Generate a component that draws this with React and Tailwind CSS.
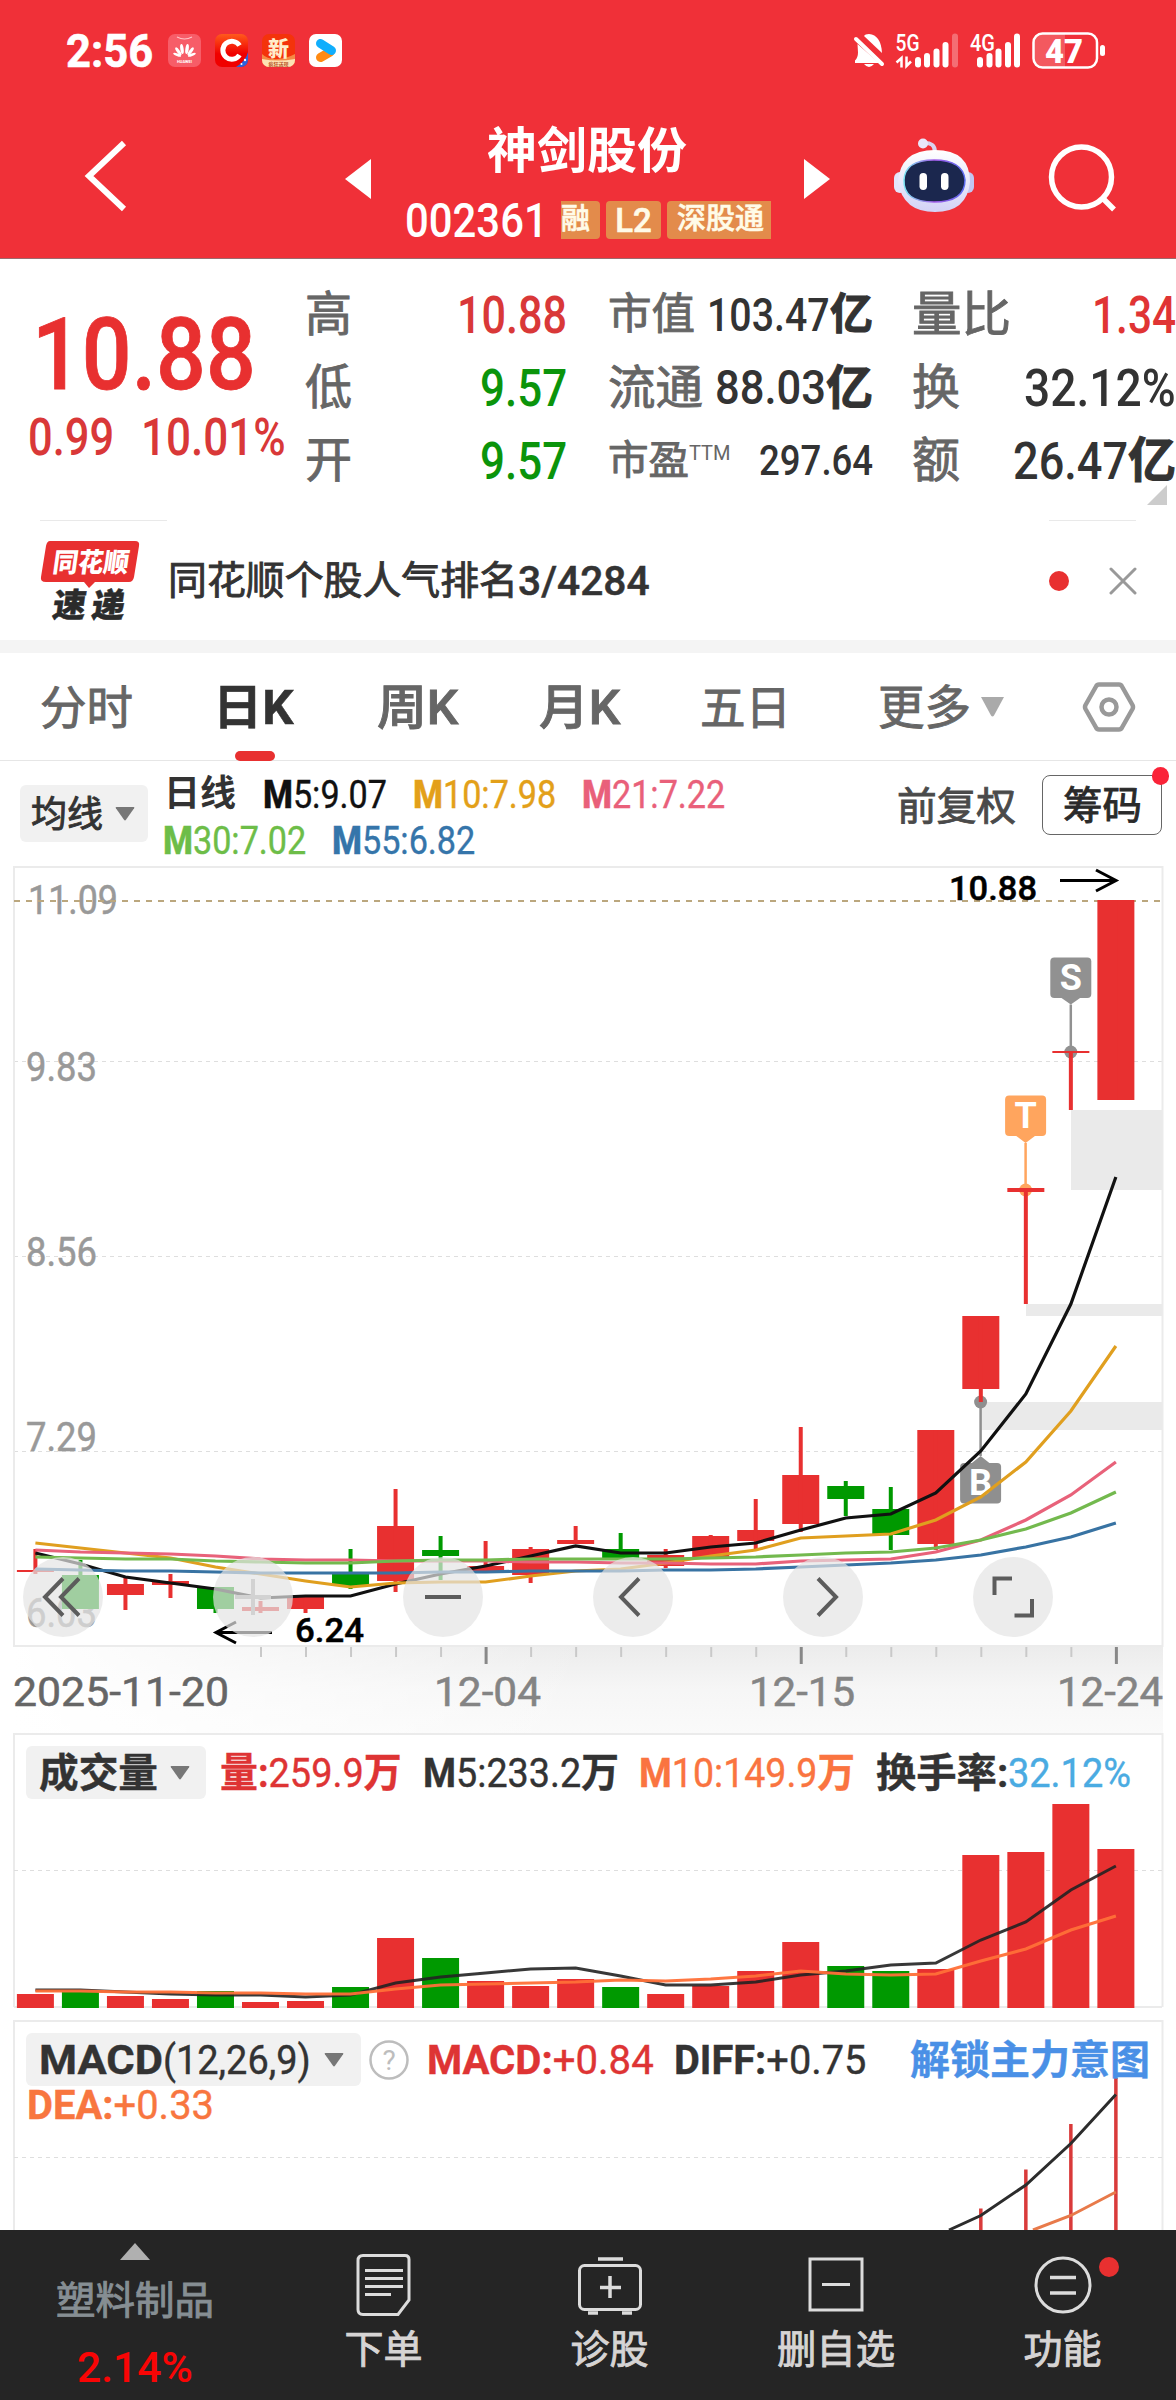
import { useLayoutEffect, useRef } from 'react'

const RED = '#e83030'
const GREEN = '#009900'

// x centre of the n-th trading day, shared by every chart
const cx = (i) => 35.4 + i * 45.02

// [up, bodyTop, bodyBottom, wickTop, wickBottom]
const CANDLES = [
  [1, 1570, 1572, 1549, 1574],
  [0, 1575, 1609, 1560, 1609],
  [1, 1584, 1595, 1578, 1610],
  [1, 1581, 1585, 1574, 1598],
  [0, 1587, 1609, 1587, 1613],
  [1, 1607, 1611, 1601, 1613],
  [1, 1597, 1609, 1597, 1613],
  [0, 1574, 1586, 1549, 1589],
  [1, 1526, 1581, 1489, 1592],
  [0, 1550, 1556, 1536, 1580],
  [1, 1566, 1571, 1541, 1572],
  [1, 1549, 1575, 1547, 1583],
  [1, 1540, 1544, 1526, 1544],
  [0, 1549, 1559, 1533, 1560],
  [1, 1555, 1566, 1549, 1568],
  [1, 1536, 1557, 1535, 1557],
  [1, 1530, 1541, 1499, 1549],
  [1, 1475, 1524, 1427, 1532],
  [0, 1486, 1499, 1481, 1516],
  [0, 1509, 1535, 1487, 1550],
  [1, 1430, 1544, 1430, 1550],
  [1, 1316, 1389, 1316, 1402],
  [1, 1188, 1192, 1190, 1304],
  [1, 1051, 1053, 1052, 1110],
  [1, 900, 1100, 900, 1100],
]

const AVERAGES = [
  { color: '#111111', y: [1553, 1564, 1577, 1583, 1589, 1598, 1596, 1596, 1584, 1574, 1566, 1556, 1546, 1553, 1553, 1547, 1543, 1530, 1518, 1514, 1493, 1451, 1394, 1304, 1177] },
  { color: '#e09f1f', y: [1543, 1548, 1553, 1558, 1567, 1574, 1581, 1587, 1583, 1582, 1582, 1576, 1571, 1569, 1563, 1556, 1550, 1538, 1536, 1534, 1520, 1497, 1462, 1411, 1346] },
  { color: '#e8627a', y: [1550, 1552, 1553, 1554, 1556, 1559, 1560, 1560, 1561, 1561, 1561, 1562, 1562, 1563, 1563, 1564, 1564, 1561, 1560, 1559, 1552, 1540, 1520, 1495, 1462] },
  { color: '#73b94e', y: [1557, 1558, 1559, 1559, 1561, 1562, 1563, 1563, 1561, 1560, 1560, 1559, 1559, 1559, 1559, 1558, 1557, 1555, 1553, 1552, 1548, 1540, 1529, 1513, 1492] },
  { color: '#3873a3', y: [1569, 1570, 1571, 1571, 1572, 1573, 1573, 1573, 1573, 1572, 1572, 1571, 1571, 1571, 1570, 1570, 1569, 1567, 1565, 1563, 1560, 1555, 1547, 1537, 1523] },
]

const VOLUME_TOPS = [1994, 1992, 1996, 1999, 1991, 2002, 2001, 1987, 1938, 1958, 1981, 1986, 1979, 1987, 1994, 1986, 1971, 1942, 1966, 1971, 1969, 1855, 1852, 1804, 1849]
const VOLUME_M5 = [1990, 1990, 1992, 1994, 1995, 1995, 1997, 1995, 1983, 1977, 1973, 1969, 1968, 1976, 1985, 1985, 1982, 1975, 1971, 1965, 1963, 1940, 1922, 1890, 1866]
const VOLUME_M10 = [1991, 1991, 1992, 1992, 1993, 1993, 1994, 1994, 1989, 1985, 1984, 1983, 1982, 1980, 1981, 1979, 1976, 1971, 1974, 1975, 1974, 1961, 1949, 1930, 1916]

const linePoints = (ys) => ys.map((y, i) => `${cx(i)},${y}`).join(' ')

// Condenses one line of text to the width its class gives it
function Fit({ className = '', children }) {
  const box = useRef(null)
  const text = useRef(null)

  useLayoutEffect(() => {
    const scale = box.current.clientWidth / text.current.offsetWidth
    text.current.style.transform = `translateY(3%) scaleX(${scale})`
  }, [children])

  return (
    <span ref={box} className={`block shrink-0 whitespace-nowrap leading-none ${className}`}>
      <span ref={text} className="inline-block origin-left">{children}</span>
    </span>
  )
}

// Chinese label between regular and bold
function Label({ className = '', children }) {
  return <Fit className={`[-webkit-text-stroke:0.9px_currentColor] ${className}`}>{children}</Fit>
}

function AxisText({ x, y, w, children, fill = '#999999', weight = 400, size = 40 }) {
  return (
    <text x={x} y={y} textLength={w} lengthAdjust="spacingAndGlyphs" fill={fill} stroke={fill} strokeWidth="0.5" fontSize={size} fontWeight={weight}>
      {children}
    </text>
  )
}

function Caret({ className = '' }) {
  return (
    <svg viewBox="0 0 20 14" className={`h-[14px] w-[20px] shrink-0 ${className}`} fill="currentColor">
      <path d="M1.5 0h17q1.5 0 .6 1.3L11 12.8q-1 1.2-2 0L.9 1.3Q0 0 1.5 0Z" />
    </svg>
  )
}

function StatusBar() {
  return (
    <div className="flex h-[100px] items-center pl-[66px] pr-[71px]">
      <Fit className="w-[87px] text-[46px] font-bold [-webkit-text-stroke:0.6px_currentColor]">2:56</Fit>
      <div className="ml-[15px] flex gap-[14px]">
        <svg className="h-[33px] w-[33px]" viewBox="0 0 33 33">
          <rect width="33" height="33" rx="7" fill="#f75d68" />
          <path d="M9 3q7.500 4 15 0" stroke="#ffc4c8" fill="none" strokeWidth="1.200" />
          <g fill="#fff">
            <ellipse cx="14.800" cy="15" rx="1.700" ry="5" transform="rotate(-8 14.800 21)" />
            <ellipse cx="18.200" cy="15" rx="1.700" ry="5" transform="rotate(8 18.200 21)" />
            <ellipse cx="13.500" cy="16" rx="1.600" ry="4.800" transform="rotate(-36 14 21.500)" />
            <ellipse cx="19.500" cy="16" rx="1.600" ry="4.800" transform="rotate(36 19 21.500)" />
            <ellipse cx="13" cy="17.500" rx="1.300" ry="4.200" transform="rotate(-68 13.500 22)" />
            <ellipse cx="20" cy="17.500" rx="1.300" ry="4.200" transform="rotate(68 19.500 22)" />
          </g>
          <text x="16.500" y="28.500" fontSize="4" fontWeight="700" fill="#fff" textAnchor="middle">HUAWEI</text>
        </svg>
        <svg className="h-[33px] w-[33px]" viewBox="0 0 33 33">
          <defs>
            <linearGradient id="c-bg" x1="0" y1="0" x2="0" y2="1">
              <stop offset="0" stopColor="#ff5a1c" />
              <stop offset="0.600" stopColor="#f00000" />
            </linearGradient>
            <clipPath id="c-clip"><rect width="33" height="33" rx="7" /></clipPath>
          </defs>
          <g clipPath="url(#c-clip)">
            <rect width="33" height="33" fill="url(#c-bg)" />
            <path d="M33 18 Q31 27 21 33H33Z" fill="#2d62dc" />
            <path d="M24.500 11.500A9 9 0 1 0 24.500 21" stroke="#fff" strokeWidth="5" fill="none" />
            <circle cx="30" cy="26" r="1.200" fill="#fff" />
            <circle cx="26.500" cy="30" r="1" fill="#fff" />
          </g>
        </svg>
        <svg className="h-[33px] w-[33px]" viewBox="0 0 33 33">
          <clipPath id="x-clip"><rect width="33" height="33" rx="7" /></clipPath>
          <g clipPath="url(#x-clip)">
            <rect width="33" height="33" fill="#f4330b" />
            <path d="M0 20q6 6 16 5t17-5v13H0Z" fill="#f58a45" />
            <path d="M0 25q16 3 33 0v8H0Z" fill="#fde3b4" />
            <text x="16.500" y="22" fontSize="21" fontWeight="900" fill="#ffeecb" textAnchor="middle">新</text>
            <text x="16.500" y="31.500" fontSize="5" fontWeight="700" fill="#b8562a" textAnchor="middle">疯狂送现</text>
          </g>
        </svg>
        <svg className="h-[33px] w-[33px]" viewBox="0 0 33 33">
          <rect width="33" height="33" rx="7" fill="#fff" />
          <path d="M11.500 23.500 21 18" stroke="#ff8a12" strokeWidth="9" strokeLinecap="round" />
          <path d="M11.500 9.500 22.500 16.500" stroke="#10aefc" strokeWidth="9" strokeLinecap="round" />
        </svg>
      </div>

      <svg className="ml-auto h-[40px] w-[252px]" viewBox="853 29 252 40" fill="#fff">
        {/* Muted bell */}
        <path d="M864 35q1-2 5-2 12 1 13 19Z" />
        <path d="M857.500 43 879 62h-24v-2.500q3-3 3-8Z" />
        <path d="M856 38 882 63" stroke="#fff" strokeWidth="4" strokeLinecap="round" />
        <path d="M864 63h10q-5 6-10 0Z" />
        {/* First SIM */}
        <text x="895.500" y="50" fontSize="24" fontWeight="500" textLength="24" lengthAdjust="spacingAndGlyphs">5G</text>
        <path d="M896.500 61.500l5-4.500v9.500M906.500 55.500V65l4.500-4.500" stroke="#fff" strokeWidth="2.500" fill="none" />
        <rect x="915" y="56" width="6" height="10.500" rx="3" />
        <rect x="924" y="52" width="6" height="14.500" rx="3" />
        <rect x="933.500" y="47.500" width="6" height="19" rx="3" />
        <rect x="942.500" y="41" width="6" height="25.500" rx="3" />
        <rect x="952" y="32.500" width="6" height="34" rx="3" fillOpacity=".3" />
        {/* Second SIM */}
        <text x="970" y="50" fontSize="24" fontWeight="500" textLength="25" lengthAdjust="spacingAndGlyphs">4G</text>
        <rect x="977" y="56" width="6" height="10.500" rx="3" />
        <rect x="986.500" y="52" width="6" height="14.500" rx="3" />
        <rect x="995.500" y="47.500" width="6" height="19" rx="3" />
        <rect x="1005" y="41" width="6" height="25.500" rx="3" />
        <rect x="1014" y="32.500" width="6" height="34" rx="3" />
        {/* Battery */}
        <path d="M1065 33v34h-22q-9 0-9-9v-16q0-9 9-9Z" fillOpacity=".2" />
        <rect x="1033.500" y="32.500" width="63.500" height="34" rx="9" fill="none" stroke="#fff" strokeWidth="2.500" />
        <rect x="1100" y="44" width="5" height="11" rx="2.500" />
        <text x="1045" y="62" fontSize="34" fontWeight="900" textLength="38" lengthAdjust="spacingAndGlyphs">47</text>
      </svg>
    </div>
  )
}

function TitleBar() {
  return (
    <div className="flex h-[158px] items-start text-white">
      <svg className="ml-[82px] mt-[38px] h-[76px] w-[46px]" viewBox="81 138 46 76" fill="none" stroke="#fff" strokeWidth="6">
        <path d="M123 143 88 176l35 33" />
      </svg>
      <svg className="ml-[217px] mt-[59px] h-[40px] w-[26px]" viewBox="0 0 26 40" fill="#fff">
        <path d="M26 0v40L0 20Z" />
      </svg>
      <div className="ml-[34px] w-[400px]">
        <Fit className="ml-[82px] mt-[26px] w-[200px] text-[49px] font-bold">神剑股份</Fit>
        <div className="mt-[21px] flex items-center">
          <Fit className="w-[143px] text-[48px] font-medium">002361</Fit>
          <div className="ml-[13px] flex gap-[6px] text-[29px] font-medium leading-[37px] text-[#fffbe8] [-webkit-text-stroke:0.6px_currentColor]">
            <span className="h-[38px] w-[39px] rounded-r-[4px] bg-[#e38b4b]">融</span>
            <span className="h-[38px] w-[55px] rounded-[4px] bg-[#e38b4b] text-center text-[33px] leading-[39px]">L2</span>
            <span className="h-[38px] w-[104px] whitespace-nowrap rounded-l-[4px] bg-[#e38b4b] pl-[10px]">深股通</span>
          </div>
        </div>
      </div>
      <svg className="-ml-px mt-[59px] h-[40px] w-[26px]" viewBox="0 0 26 40" fill="#fff">
        <path d="M0 0v40l26-20Z" />
      </svg>
      {/* Assistant */}
      <svg className="ml-[63px] mt-[38px] h-[76px] w-[82px]" viewBox="893 138 82 76">
        <defs>
          <linearGradient id="bot-head" x1="0" y1="0" x2="0" y2="1">
            <stop offset="0" stopColor="#fff" />
            <stop offset="1" stopColor="#d3d2f6" />
          </linearGradient>
          <linearGradient id="bot-rim" x1="0" y1="0" x2="1" y2="0">
            <stop offset="0" stopColor="#7be4f2" />
            <stop offset="0.500" stopColor="#a35be8" />
            <stop offset="1" stopColor="#5a6cf0" />
          </linearGradient>
        </defs>
        <path d="M923 143q12-1 12 9" fill="none" stroke="#d9d3ef" strokeWidth="4" />
        <circle cx="923" cy="143.500" r="5" fill="#e9e6fa" />
        <rect x="894" y="172" width="12" height="21" rx="6" fill="#e3e4fb" />
        <rect x="962" y="172" width="12" height="21" rx="6" fill="#c2c6f2" />
        <path d="M898 182q2-32 37-32t35 32q-3 30-35 30t-37-30Z" fill="url(#bot-head)" />
        <path d="M904 180q1-20 30-20t31 20q0 22-31 22t-30-22Z" fill="#1b274e" stroke="url(#bot-rim)" strokeWidth="1.500" />
        <rect x="919.500" y="173" width="7.500" height="17" rx="3.700" fill="#fff" />
        <rect x="941" y="173" width="7.500" height="17" rx="3.700" fill="#fff" />
      </svg>
      <svg className="ml-[73px] mt-[43px] h-[70px] w-[70px]" viewBox="1048 143 70 70" fill="none" stroke="#fff" strokeWidth="5.500">
        <circle cx="1081.500" cy="177" r="30" />
        <path d="M1102 197.500 1114 209.500" />
      </svg>
    </div>
  )
}

function QuoteRow({ label, children }) {
  return (
    <div className="flex h-[73px] items-center justify-between">
      <div className="flex text-[#666]">{label}</div>
      <div className="flex items-center font-medium text-[#333]">{children}</div>
    </div>
  )
}

function Quote() {
  return (
    <div className="relative flex h-[261px]">
      <div className="w-[305px] pt-[42px] text-[#e83030]">
        <Fit className="ml-[32px] w-[224px] text-[101px] font-medium [-webkit-text-stroke:0.8px_currentColor]">10.88</Fit>
        <div className="mt-[8px] flex font-medium text-[#d93838]">
          <Fit className="ml-[28px] w-[86px] text-[51px]">0.99</Fit>
          <Fit className="ml-[27px] w-[145px] text-[51px]">10.01%</Fit>
        </div>
      </div>
      <div className="w-[262px] pt-[18px]">
        <QuoteRow label={<Label className="w-[47px] text-[48px]">高</Label>}>
          <Fit className="w-[110px] text-[51px] text-[#d93838]">10.88</Fit>
        </QuoteRow>
        <QuoteRow label={<Label className="w-[47px] text-[48px]">低</Label>}>
          <Fit className="w-[87px] text-[51px] text-[#0b940b]">9.57</Fit>
        </QuoteRow>
        <QuoteRow label={<Label className="w-[47px] text-[48px]">开</Label>}>
          <Fit className="w-[87px] text-[51px] text-[#0b940b]">9.57</Fit>
        </QuoteRow>
      </div>
      <div className="ml-[41px] w-[265px] pt-[18px]">
        <QuoteRow label={<Label className="w-[87px] text-[43px]">市值</Label>}>
          <Fit className="w-[123px] text-[46px]">103.47</Fit>
          <Fit className="w-[43px] text-[43px] font-bold [-webkit-text-stroke:1px_currentColor]">亿</Fit>
        </QuoteRow>
        <QuoteRow label={<Label className="w-[95px] text-[47px]">流通</Label>}>
          <Fit className="w-[111px] text-[49px]">88.03</Fit>
          <Fit className="w-[47px] text-[47px] font-bold [-webkit-text-stroke:1px_currentColor]">亿</Fit>
        </QuoteRow>
        <QuoteRow
          label={
            <>
              <Label className="w-[81px] text-[40px]">市盈</Label>
              <Fit className="mt-[2px] w-[42px] text-[21px]">TTM</Fit>
            </>
          }
        >
          <Fit className="w-[114px] text-[43px]">297.64</Fit>
        </QuoteRow>
      </div>
      <div className="ml-[39px] w-[264px] pt-[18px]">
        <QuoteRow label={<Label className="w-[99px] text-[48px]">量比</Label>}>
          <Fit className="w-[84px] text-[51px] text-[#e03434]">1.34</Fit>
        </QuoteRow>
        <QuoteRow label={<Label className="w-[48px] text-[48px]">换</Label>}>
          <Fit className="w-[152px] text-[51px]">32.12%</Fit>
        </QuoteRow>
        <QuoteRow label={<Label className="w-[48px] text-[48px]">额</Label>}>
          <Fit className="w-[115px] text-[51px]">26.47</Fit>
          <Fit className="w-[48px] text-[48px] font-bold [-webkit-text-stroke:1px_currentColor]">亿</Fit>
        </QuoteRow>
      </div>
      <svg className="absolute bottom-[15px] right-[9px] h-[20px] w-[20px]" viewBox="0 0 20 20" fill="#cccccc">
        <path d="M20 0v20H0Z" />
      </svg>
    </div>
  )
}

function News() {
  return (
    <>
      <div className="flex justify-between px-[40px]">
        <div className="h-px w-[127px] bg-[#e9e9e9]" />
        <div className="h-px w-[87px] bg-[#e9e9e9]" />
      </div>
      <div className="flex h-[119px] items-center pl-[40px] pr-[39px]">
        <svg className="h-[90px] w-[110px] overflow-visible" viewBox="40 535 110 90">
          <path d="M50 540h85q5 0 4 5l-5 31q-1 5-5 5H95l-6 6-5-6H46q-6 0-5-5l5-31q1-5 4-5Z" fill={RED} />
          <g fontWeight="900" transform="skewX(-8)">
            <text x="132" y="571" fontSize="27" fill="#fff" textLength="76" lengthAdjust="spacingAndGlyphs">同花顺</text>
            <text x="138" y="616" fontSize="33" fill="#2b2b2b" stroke="#2b2b2b" strokeWidth="0.500" textLength="72" lengthAdjust="spacing">速递</text>
          </g>
        </svg>
        <Label className="ml-[18px] w-[350px] text-[39px] text-[#333]">同花顺个股人气排名</Label>
        <Fit className="w-[132px] text-[41px] font-medium text-[#333] [-webkit-text-stroke:0.5px_currentColor]">3/4284</Fit>
        <div className="ml-auto h-[20px] w-[20px] rounded-full bg-[#e83030]" />
        <svg className="ml-[40px] h-[28px] w-[28px]" viewBox="0 0 28 28" stroke="#999999" strokeWidth="3" strokeLinecap="round">
          <path d="M2 2 26 26M26 2 2 26" />
        </svg>
      </div>
    </>
  )
}

function Tabs() {
  return (
    <div className="flex h-[108px] items-center justify-between border-b border-[#e6e6e6] px-[40px] text-[#666]">
      <Label className="w-[93px] text-[46px]">分时</Label>
      <div className="relative -ml-px mr-px">
        <Fit className="w-[81px] text-[48px] font-bold text-[#333] [-webkit-text-stroke:0.5px_currentColor]">日K</Fit>
        <div className="absolute -bottom-[30px] left-[22px] h-[10px] w-[40px] rounded-full bg-[#e83030]" />
      </div>
      <Label className="-mr-px ml-px w-[81px] text-[48px] font-medium">周K</Label>
      <Label className="ml-px w-[81px] text-[48px] font-medium">月K</Label>
      <Label className="-ml-[2px] mr-[2px] w-[91px] text-[46px]">五日</Label>
      <div className="-mr-[4px] ml-[4px] flex items-center">
        <Label className="w-[93px] text-[47px]">更多</Label>
        <svg className="ml-[9px] h-[20px] w-[25px] text-[#aaa]" viewBox="0 0 25 20" fill="currentColor">
          <path d="M1 0h23L14 18.500q-1.500 2-3 0Z" />
        </svg>
      </div>
      <svg className="h-[50px] w-[54px]" viewBox="0 0 54 50" fill="none" stroke="#999999" strokeWidth="4.500" strokeLinejoin="round">
        <path d="M17 2.500h20q2 0 3 2L50.500 23q1 2 0 4L40 45.500q-1 2-3 2H17q-2 0-3-2L3.500 27q-1-2 0-4L14 4.500q1-2 3-2Z" />
        <circle cx="27" cy="25" r="7.500" />
      </svg>
    </div>
  )
}

function Average({ name, value, className, width }) {
  return (
    <Fit className={`text-[38px] [-webkit-text-stroke:0.4px_currentColor] ${width} ${className}`}>
      <b className="font-extrabold">{name}</b>{value}
    </Fit>
  )
}

function AverageLegend() {
  return (
    <div className="flex h-[105px] items-start pl-[20px]">
      <div className="mt-[24px] flex h-[57px] w-[128px] items-center rounded-[6px] bg-[#f1f1f1] pl-[11px]">
        <Label className="w-[72px] text-[36px] text-[#333]">均线</Label>
        <Caret className="ml-[12px] text-[#777]" />
      </div>
      <div className="ml-[16px] mt-[14px] w-[700px]">
        <div className="flex">
          <Fit className="w-[72px] text-[36px] font-bold text-[#333]">日线</Fit>
          <Average name="M" value="5:9.07" width="ml-[27px] w-[124px]" className="text-[#111]" />
          <Average name="M" value="10:7.98" width="ml-[26px] w-[143px]" className="text-[#e3a019]" />
          <Average name="M" value="21:7.22" width="ml-[26px] w-[143px]" className="text-[#e9607a]" />
        </div>
        <div className="mt-[8px] flex">
          <Average name="M" value="30:7.02" width="-ml-px w-[143px]" className="text-[#6dbd48]" />
          <Average name="M" value="55:6.82" width="ml-[26px] w-[143px]" className="text-[#3575aa]" />
        </div>
      </div>
      <Label className="ml-[33px] mt-[26px] w-[119px] text-[39px] text-[#4a4a4a]">前复权</Label>
      <div className="relative ml-[26px] mt-[14px] flex h-[60px] w-[120px] items-center justify-center rounded-[8px] border border-[#666]">
        <Label className="w-[79px] text-[39px] text-[#2a2a2a]">筹码</Label>
        <div className="absolute -right-[8px] -top-[9px] h-[18px] w-[17px] rounded-full bg-[#fa2338]" />
      </div>
    </div>
  )
}

function Marker({ x, boxY, dotY, tipY, letter, color, up }) {
  return (
    <g>
      <path d={`M${x} ${tipY}V${dotY}`} stroke={color} strokeWidth="2.500" />
      <circle cx={x} cy={dotY} r="6.500" fill={color} />
      <path d={up ? `M${x - 10} ${boxY + 1}L${x} ${tipY}L${x + 10} ${boxY + 1}Z` : `M${x - 10} ${boxY + 40}L${x} ${tipY}L${x + 10} ${boxY + 40}Z`} fill={color} />
      <rect x={x - 20.5} y={boxY} width="41" height="40.500" rx="4" fill={color} />
      <text x={x} y={boxY + 32} fontSize="36" fontWeight="700" fill="#fff" textAnchor="middle">{letter}</text>
    </g>
  )
}

function ChartButton({ children, faded }) {
  return (
    <button className="flex h-[80px] w-[80px] items-center justify-center rounded-full bg-[#e4e4e4]/70">
      <svg
        className="h-[44px] w-[44px]"
        viewBox="0 0 44 44"
        fill="none"
        stroke={faded ? '#d2d2d2' : '#5c5c5c'}
        strokeWidth="4"
      >
        {children}
      </svg>
    </button>
  )
}

function PriceChart() {
  return (
    <div className="relative">
      <svg className="block h-[867px] w-full" viewBox="0 866 1176 867">
        <defs>
          <linearGradient id="axis-down" x1="0" y1="0" x2="0" y2="1">
            <stop offset="0" stopColor="#ececec" />
            <stop offset="0.500" stopColor="#f6f6f6" />
            <stop offset="1" stopColor="#fafafa" />
          </linearGradient>
          <linearGradient id="axis-side" x1="0" y1="0" x2="1" y2="0">
            <stop offset="0" stopColor="#fff" />
            <stop offset="0.500" stopColor="#fff" stopOpacity="0" />
          </linearGradient>
        </defs>
        <rect x="13" y="1647" width="1150" height="86" fill="url(#axis-down)" />
        <rect x="13" y="1647" width="1150" height="86" fill="url(#axis-side)" />

        {/* Price gaps */}
        <g fill="#eaeaea">
          <rect x="1071" y="1110" width="92" height="80" />
          <rect x="1026" y="1304" width="137" height="12" />
          <rect x="981" y="1402" width="182" height="28" />
        </g>

        <g stroke="#dedede" strokeDasharray="4 4">
          <path d="M14 1061.500H1162M14 1256.500H1162M14 1451.500H1162" />
        </g>
        <rect x="14" y="867" width="1148.500" height="779" fill="none" stroke="#ebebeb" strokeWidth="2" />

        <AxisText x="28" y="914" w="90">11.09</AxisText>
        <AxisText x="26" y="1081" w="71">9.83</AxisText>
        <AxisText x="26" y="1266" w="71">8.56</AxisText>
        <AxisText x="26" y="1451" w="71">7.29</AxisText>
        <AxisText x="26" y="1627" w="71">6.03</AxisText>
        <path d="M14 901H1162" stroke="#bba77e" strokeWidth="2" strokeDasharray="6 6" />

        <Marker x={980.6} boxY={1463} tipY={1456} dotY={1402} letter="B" color="#8f8f8f" up />
        <Marker x={1025.6} boxY={1095.5} tipY={1143} dotY={1190} letter="T" color="#ffa55e" />
        <Marker x={1070.8} boxY={957.5} tipY={1004.5} dotY={1052} letter="S" color="#919191" />

        {CANDLES.map(([up, top, bottom, high, low], i) => (
          <g key={i} fill={up ? RED : GREEN}>
            <rect x={cx(i) - 18.5} y={top} width="37" height={bottom - top} />
            <rect x={cx(i) - 2} y={high} width="4" height={low - high} />
          </g>
        ))}

        {AVERAGES.map((line) => (
          <polyline key={line.color} points={linePoints(line.y)} fill="none" stroke={line.color} strokeWidth="3.200" />
        ))}

        {/* High and low callouts */}
        <AxisText x="949" y="900" w="88" fill="#000" weight={500} size={34}>10.88</AxisText>
        <path d="M1060 880.500h55M1096 870l20 10.500-20 10.500" stroke="#000" strokeWidth="3" fill="none" />
        <AxisText x="295" y="1642" w="69" fill="#000" weight={500} size={34}>6.24</AxisText>
        <path d="M272 1632.500h-56M236 1622l-20 10.500 20 10.500" stroke="#000" strokeWidth="3" fill="none" />

        {CANDLES.map((_, i) => {
          if (i < 5) return null
          const major = i === 10 || i === 17 || i === 24
          return (
            <path key={i} d={`M${cx(i) + 0.5} 1647V${major ? 1664 : 1657}`} stroke={major ? '#888' : '#c9c9c9'} strokeWidth={major ? 3 : 2} />
          )
        })}
        <AxisText x="13" y="1706" w="216" fill="#666">2025-11-20</AxisText>
        <AxisText x="434" y="1706" w="107" fill="#848484">12-04</AxisText>
        <AxisText x="749" y="1706" w="106" fill="#848484">12-15</AxisText>
        <AxisText x="1057" y="1706" w="106" fill="#848484">12-24</AxisText>
      </svg>

      <div className="absolute left-[23px] top-[691px] flex gap-[110px]">
        <ChartButton><path d="M22 3.500 4 22l18 18.500M38 3.500 20 22l18 18.500" /></ChartButton>
        <ChartButton faded><path d="M4 22h36M22 4v36" /></ChartButton>
        <ChartButton><path d="M4 22h36" /></ChartButton>
        <ChartButton><path d="M28 3.500 10 22l18 18.500" /></ChartButton>
        <ChartButton><path d="M17 3.500 35 22l-18 18.500" /></ChartButton>
        <ChartButton><path d="M3.500 20V3.500H21M41 24v16.500H23.500" /></ChartButton>
      </div>
    </div>
  )
}

function VolumeChart() {
  return (
    <div className="relative h-[287px]">
      <svg className="block h-[287px] w-full" viewBox="0 1733 1176 287">
        <path d="M14 2007V1734H1162.500V2007" fill="none" stroke="#ebebeb" strokeWidth="2" />
        <path d="M14 2007H1162" stroke="#ebebeb" strokeWidth="2" />
        <path d="M14 1870.500H1162" stroke="#dedede" strokeDasharray="4 4" />
        {VOLUME_TOPS.map((top, i) => (
          <rect key={i} x={cx(i) - 18.5} y={top} width="37" height={2008 - top} fill={CANDLES[i][0] ? RED : GREEN} />
        ))}
        <polyline points={linePoints(VOLUME_M5)} fill="none" stroke="#222" strokeOpacity=".9" strokeWidth="3" />
        <polyline points={linePoints(VOLUME_M10)} fill="none" stroke="#ff7038" strokeOpacity=".95" strokeWidth="3" />
      </svg>
      <div className="absolute left-[26px] top-[13px] flex h-[53px] items-center text-[41px] text-[#333] [-webkit-text-stroke:0.4px_currentColor]">
        <div className="flex h-[53px] w-[180px] items-center rounded-[6px] bg-[#f1f1f1] pl-[13px]">
          <Fit className="w-[119px] text-[40px] font-bold">成交量</Fit>
          <Caret className="ml-[12px] text-[#777]" />
        </div>
        <Fit className="ml-[14px] w-[182px] text-[#de3434]"><b>量:</b>259.9<b>万</b></Fit>
        <Fit className="ml-[21px] w-[196px]"><b>M</b>5:233.2<b>万</b></Fit>
        <Fit className="ml-[20px] w-[216px] text-[#fa7440]"><b>M</b>10:149.9<b>万</b></Fit>
        <Fit className="ml-[21px] w-[132px] text-[40px] font-bold">换手率:</Fit>
        <Fit className="w-[123px] text-[#4aabe2]">32.12%</Fit>
      </div>
    </div>
  )
}

function MacdChart() {
  return (
    <div className="relative h-[210px]">
      <svg className="block h-[210px] w-full" viewBox="0 2020 1176 210">
        <path d="M14 2230V2021H1162.500V2230" fill="none" stroke="#ebebeb" strokeWidth="2" />
        <path d="M14 2157.500H1162" stroke="#dedede" strokeDasharray="4 4" />
        <path d={`M${cx(21)} 2208.500V2230M${cx(22)} 2169.500V2230M${cx(23)} 2124V2230M${cx(24)} 2078V2230`} stroke="#d93a3a" strokeWidth="3.500" />
        <polyline points={`949,2230 ${cx(21)},2215.500 ${cx(22)},2185 ${cx(23)},2143.500 ${cx(24)},2094.500`} fill="none" stroke="#2c2c2c" strokeWidth="3" />
        <polyline points={`1033,2230 ${cx(23)},2215.500 ${cx(24)},2192`} fill="none" stroke="#e87a4a" strokeWidth="3" />
      </svg>
      <div className="absolute left-[26px] top-[13px] flex h-[53px] items-center text-[41px] text-[#333] [-webkit-text-stroke:0.4px_currentColor]">
        <div className="flex h-[53px] w-[335px] items-center rounded-[6px] bg-[#f1f1f1] pl-[13px]">
          <Fit className="w-[124px] font-bold">MACD</Fit>
          <Fit className="w-[148px]">(12,26,9)</Fit>
          <Caret className="ml-[13px] text-[#777]" />
        </div>
        <svg className="ml-[8px] h-[40px] w-[40px]" viewBox="0 0 40 40">
          <circle cx="20" cy="20" r="18.500" fill="none" stroke="#bdbdbd" strokeWidth="2.500" />
          <text x="20" y="30" fontSize="28" fontWeight="400" fill="#bdbdbd" textAnchor="middle">?</text>
        </svg>
        <Fit className="ml-[18px] w-[227px] text-[#de3434]"><b>MACD:</b>+0.84</Fit>
        <Fit className="ml-[20px] w-[192px]"><b>DIFF:</b>+0.75</Fit>
        <Fit className="ml-[44px] w-[240px] text-[40px] font-bold text-[#4a90e6]">解锁主力意图</Fit>
      </div>
      <div className="absolute left-[27px] top-[64px] text-[41px] text-[#f8763f] [-webkit-text-stroke:0.4px_currentColor]">
        <Fit className="w-[187px]"><b>DEA:</b>+0.33</Fit>
      </div>
    </div>
  )
}

function NavItem({ label, className, width, children }) {
  return (
    <div className={`flex flex-col items-center ${className}`}>
      <svg className="mt-[20px] h-[70px] w-[70px]" viewBox="0 0 70 70" fill="none" stroke="#dcdcdc" strokeWidth="3">
        {children}
      </svg>
      <Label className={`mt-[10px] text-[39px] text-[#d6d4d4] ${width}`}>{label}</Label>
    </div>
  )
}

function BottomNav() {
  return (
    <div className="flex h-[170px] bg-[#252525]">
      <div className="flex w-[270px] flex-col items-center">
        <svg className="mt-[13px] h-[17px] w-[30px]" viewBox="0 0 30 17" fill="#b0b0b0"><path d="M15 0 30 17H0Z" /></svg>
        <Label className="mt-[21px] w-[158px] text-[39px] text-[#868e93]">塑料制品</Label>
        <Fit className="mt-[25px] w-[116px] text-[43px] font-medium text-[#f90505]">2.14%</Fit>
      </div>
      <NavItem label="下单" width="w-[78px]" className="w-[227px]">
        <path d="M14 5.500h42q4 0 4 4V50L49 64.500H14q-5 0-5-5v-49q0-5 5-5Z" />
        <path d="M16 20.500h38M16 28.500h38M16 36.500h38M16 44.500h26" />
      </NavItem>
      <NavItem label="诊股" width="w-[78px]" className="w-[225px]">
        <rect x="4.500" y="15.500" width="61" height="44" rx="5" />
        <path d="M23 9h25M35 26v22M25 37.500h21M13 63h10M47 63h10" strokeWidth="3.500" />
      </NavItem>
      <NavItem label="删自选" width="w-[118px]" className="w-[227px]">
        <rect x="9" y="9" width="52" height="51" />
        <path d="M21 34.500h28" />
      </NavItem>
      <div className="relative">
        <NavItem label="功能" width="w-[78px]" className="w-[227px]">
          <circle cx="35" cy="35" r="27" />
          <path d="M22 27.500h26M22 43h26" strokeWidth="3.500" />
        </NavItem>
        <div className="absolute left-[150px] top-[27px] h-[20px] w-[20px] rounded-full bg-[#e83030]" />
      </div>
    </div>
  )
}

export default function App() {
  return (
    <div className="h-[2400px] w-[1176px] overflow-hidden bg-white font-['Roboto','Noto_Sans_CJK_SC',sans-serif]">
      <div className="h-[259px] border-b border-[#9c6a6e] bg-[#f03038] text-white">
        <StatusBar />
        <TitleBar />
      </div>
      <Quote />
      <News />
      <div className="h-[13px] bg-[#f4f4f4]" />
      <Tabs />
      <AverageLegend />
      <PriceChart />
      <VolumeChart />
      <MacdChart />
      <BottomNav />
    </div>
  )
}
